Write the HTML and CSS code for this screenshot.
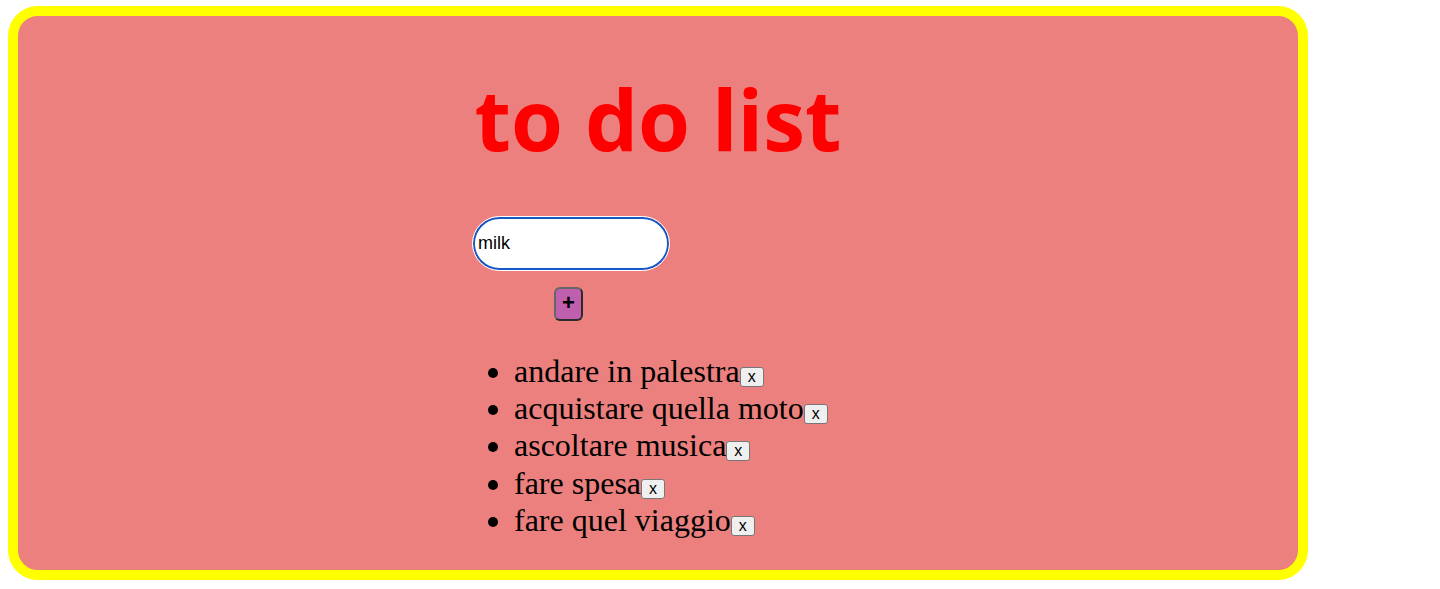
FILE: index.html
```html
<!DOCTYPE html>
<html>
<head>
<meta charset="utf-8">
<link rel="stylesheet" href="styles.css">
</head>
<body>
<div class="box">
  <div class="wrap">
    <h1 class="title">to do list</h1>
    <div class="form">
      <input class="field" type="text" value="milk">
      <button class="add">+</button>
    </div>
    <ul class="list">
      <li>andare in palestra<button class="del">x</button></li>
      <li>acquistare quella moto<button class="del">x</button></li>
      <li>ascoltare musica<button class="del">x</button></li>
      <li>fare spesa<button class="del">x</button></li>
      <li>fare quel viaggio<button class="del">x</button></li>
    </ul>
  </div>
</div>
</body>
</html>
```
FILE: styles.css
```css
body {
  margin: 6px 8px;
  font-family: "Liberation Serif", serif;
}
.box {
  width: 1280px;
  height: 554px;
  border: 10px solid #ffff00;
  border-radius: 30px;
  background: #ec807e;
  display: flex;
  justify-content: center;
}
.wrap {
  width: 370px;
  display: flex;
  flex-direction: column;
  align-items: flex-start;
}
.title {
  align-self: center;
  margin: 53px 0 0 0;
  font-family: "Open Sans", sans-serif;
  font-weight: 700;
  font-size: 84px;
  line-height: 1.2;
  color: #ff0000;
}
.form {
  margin-top: 47px;
  display: flex;
  flex-direction: column;
  align-items: center;
  gap: 17px;
}
.field {
  width: 196px;
  height: 53px;
  box-sizing: border-box;
  border: 2px solid #1558c8;
  outline: 1px solid #ffffff;
  border-radius: 27px;
  padding: 0 3px;
  font-family: "Liberation Sans", sans-serif;
  font-size: 18px;
  color: #000;
  background: #fff;
}
.add {
  width: 29px;
  height: 34px;
  margin-right: 5px;
  background: #bf5fae;
  border: 2px solid #666666;
  border-right-color: #2a2a2a;
  border-bottom-color: #2a2a2a;
  border-radius: 6px;
  font-family: "Liberation Sans", sans-serif;
  font-weight: 700;
  font-size: 22px;
  line-height: 1;
  padding: 0 0 2px 0;
  color: #000;
}
.list {
  margin: 32px 0 0 0;
  padding-left: 41px;
  font-size: 32px;
  line-height: 37.25px;
}
.del {
  font-family: "Liberation Sans", sans-serif;
  font-size: 16px;
  line-height: 16px;
  padding: 0 7px;
  height: 20px;
  border: 1px solid #767676;
  border-radius: 3px;
  background: #efefef;
  vertical-align: 0;
  color: #000;
}
```
